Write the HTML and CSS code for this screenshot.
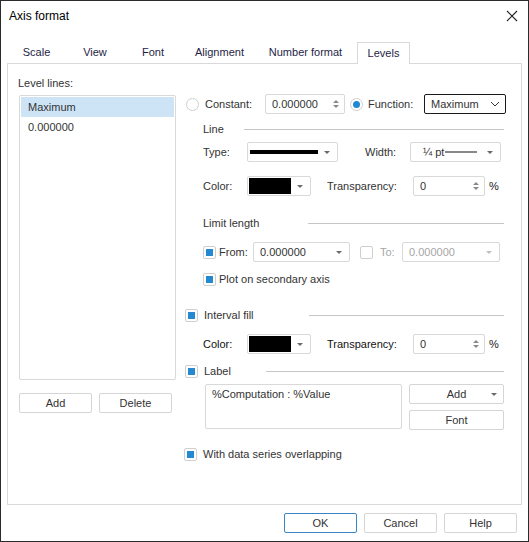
FILE: index.html
```html
<!DOCTYPE html>
<html lang="en">
<head>
  <meta charset="UTF-8">
  <title>Axis format</title>
  <link rel="stylesheet" href="styles.css">
</head>
<body>
<div class="window">
  <div class="titlebar">
    <span class="title">Axis format</span>
    <svg class="close" width="12" height="12" viewBox="0 0 12 12"><path d="M1 1 L11 11 M11 1 L1 11" stroke="#222" stroke-width="1.1" fill="none"/></svg>
  </div>

  <div class="tabs">
    <div class="tab w57">Scale</div>
    <div class="tab w59">View</div>
    <div class="tab w56">Font</div>
    <div class="tab w77">Alignment</div>
    <div class="tab w96">Number format</div>
    <div class="tab active">Levels</div>
  </div>

  <div class="panel">
    <div class="left">
      <div class="caption">Level lines:</div>
      <div class="list">
        <div class="item selected">Maximum</div>
        <div class="item">0.000000</div>
      </div>
      <div class="btn-row">
        <div class="btn w73">Add</div>
        <div class="btn w73">Delete</div>
      </div>
    </div>

    <div class="right">
      <div class="row r1">
        <span class="radio"></span>
        <span class="lbl lbl-const">Constant:</span>
        <div class="field spin w80"><span class="val">0.000000</span><span class="arrows"><i class="up"></i><i class="down"></i></span></div>
        <span class="radio on"></span>
        <span class="lbl lbl-func">Function:</span>
        <div class="field select">
          <span class="val">Maximum</span>
          <svg width="10" height="6" viewBox="0 0 10 6"><path d="M1 1 L5 5 L9 1" stroke="#333" fill="none"/></svg>
        </div>
      </div>

      <div class="heading mt8"><span>Line</span><div class="rule ml20"></div></div>

      <div class="row indent mt6">
        <span class="lbl lbl-44">Type:</span>
        <div class="field drop w91"><span class="linetype"></span><span class="tri"></span></div>
        <span class="lbl lbl-width">Width:</span>
        <div class="field drop w91"><span class="val pt">¼ pt</span><span class="thinline"></span><span class="tri"></span></div>
      </div>

      <div class="row indent mt14">
        <span class="lbl lbl-44">Color:</span>
        <div class="field drop w64"><span class="swatch"></span><span class="tri"></span></div>
        <span class="lbl lbl-transp">Transparency:</span>
        <div class="field spin w72"><span class="val">0</span><span class="arrows"><i class="up"></i><i class="down"></i></span></div>
        <span class="pct">%</span>
      </div>

      <div class="heading mt20"><span>Limit length</span><div class="rule ml49"></div></div>

      <div class="row indent mt12">
        <span class="check on"></span>
        <span class="lbl lbl-from">From:</span>
        <div class="field drop w97"><span class="val">0.000000</span><span class="tri"></span></div>
        <span class="check gap10"></span>
        <span class="lbl lbl-to dim">To:</span>
        <div class="field drop w98"><span class="val dim">0.000000</span><span class="tri light"></span></div>
      </div>

      <div class="row short indent mt10">
        <span class="check on"></span>
        <span class="lbl lbl-plot">Plot on secondary axis</span>
      </div>

      <div class="heading out mt22">
        <span class="check on"></span>
        <span class="lbl lbl-head">Interval fill</span>
        <div class="rule ml55"></div>
      </div>

      <div class="row indent mt12">
        <span class="lbl lbl-44 dark">Color:</span>
        <div class="field drop w64"><span class="swatch"></span><span class="tri"></span></div>
        <span class="lbl lbl-transp dark">Transparency:</span>
        <div class="field spin w72"><span class="val">0</span><span class="arrows"><i class="up"></i><i class="down"></i></span></div>
        <span class="pct">%</span>
      </div>

      <div class="heading out mt10">
        <span class="check on"></span>
        <span class="lbl lbl-head">Label</span>
        <div class="rule ml35"></div>
      </div>

      <div class="label-box mt6">
        <div class="textarea">%Computation : %Value</div>
        <div class="side-btns">
          <div class="btn split">Add<span class="tri"></span></div>
          <div class="btn">Font</div>
        </div>
      </div>

      <div class="row short out mt17">
        <span class="check on"></span>
        <span class="lbl lbl-head">With data series overlapping</span>
      </div>
    </div>
  </div>

  <div class="footer">
    <div class="btn w73 default">OK</div>
    <div class="btn w73">Cancel</div>
    <div class="btn w73">Help</div>
  </div>
</div>
</body>
</html>
```

FILE: styles.css
```css
body {
  margin: 0;
  font-family: "Liberation Sans", Arial, sans-serif;
  font-size: 11px;
  color: #333;
  background: #fff;
}
.window {
  width: 529px;
  height: 542px;
  box-sizing: border-box;
  border: 1px solid #2b2b2b;
  background: #fff;
}
.titlebar {
  height: 30px;
  display: flex;
  align-items: center;
  justify-content: space-between;
  padding: 0 10px 0 8px;
}
.title {
  font-size: 12px;
  color: #000;
}
.close {
  display: block;
}

/* tabs */
.tabs {
  display: flex;
  margin-top: 11px;
  padding-left: 7px;
  height: 21px;
  position: relative;
  z-index: 1;
}
.tab {
  text-align: center;
  line-height: 20px;
  color: #1e1e46;
}
.tab.w57 { width: 57px; }
.tab.w59 { width: 60px; }
.tab.w56 { width: 56px; }
.tab.w77 { width: 77px; }
.tab.w96 { width: 95px; }
.tab.active {
  width: 51px;
  margin-left: 4px;
  border: 1px solid #d9d9d9;
  border-bottom: none;
  background: #fff;
  height: 21px;
}

/* main panel */
.panel {
  margin: 0 6px 0 6px;
  height: 442px;
  box-sizing: border-box;
  border: 1px solid #d9d9d9;
  display: flex;
}
.left {
  width: 157px;
  margin-left: 11px;
  margin-top: 12px;
}
.caption {
  line-height: 14px;
  margin-left: -1px;
}
.list {
  margin-top: 5px;
  height: 285px;
  box-sizing: border-box;
  border: 1px solid #d9d9d9;
  border-radius: 2px;
  padding: 1px;
}
.item {
  height: 20px;
  line-height: 20px;
  padding-left: 7px;
  color: #333;
}
.selected {
  background: #cde4f7;
}
.btn-row {
  display: flex;
  gap: 7px;
  margin-top: 13px;
}

.btn {
  height: 20px;
  box-sizing: border-box;
  border: 1px solid #d5d5d5;
  border-radius: 2px;
  background: #fff;
  text-align: center;
  line-height: 18px;
  color: #333;
}
.btn.w73 { width: 73px; }
.btn.default { border-color: #3a86c4; }

/* right column */
.right {
  margin-left: 8px;
  margin-top: 30px;
  width: 322px;
}
.row {
  display: flex;
  align-items: center;
  height: 20px;
}
.row.short { height: 14px; }
.indent { padding-left: 19px; }
.r1 { padding-left: 2px; }
.mt6 { margin-top: 6px; }
.mt8 { margin-top: 8px; }
.mt10 { margin-top: 10px; }
.mt12 { margin-top: 12px; }
.mt14 { margin-top: 14px; }
.mt17 { margin-top: 17px; }
.mt20 { margin-top: 20px; }
.mt22 { margin-top: 22px; }

.lbl { white-space: nowrap; }
.lbl-const { width: 60px; margin-left: 6px; }
.lbl-func { width: 56px; margin-left: 5px; }
.lbl-44 { width: 44px; }
.lbl-width { width: 45px; margin-left: 27px; }
.lbl-transp { width: 86px; margin-left: 16px; }
.lbl-from { width: 34px; margin-left: 3px; }
.lbl-to { width: 22px; margin-left: 7px; }
.lbl-plot { margin-left: 3px; }
.lbl-head { margin-left: 6px; }
.dim { color: #a6a6a6; }
.dark { color: #111; }

.heading {
  display: flex;
  align-items: center;
  height: 14px;
  padding-left: 19px;
  padding-right: 2px;
}
.heading.out { padding-left: 1px; }
.row.out { padding-left: 0; }
.rule {
  flex: 1;
  height: 1px;
  background: #c6c6c6;
}
.ml20 { margin-left: 20px; }
.ml35 { margin-left: 35px; }
.ml49 { margin-left: 49px; }
.ml55 { margin-left: 55px; }

/* inputs */
.field {
  height: 20px;
  box-sizing: border-box;
  border: 1px solid #d9d9d9;
  border-radius: 2px;
  background: #fff;
  display: flex;
  align-items: center;
  position: relative;
}
.field .val { padding-left: 6px; flex: 1; }
.w64 { width: 64px; }
.w72 { width: 72px; }
.w80 { width: 80px; }
.w91 { width: 91px; }
.w97 { width: 97px; }
.w98 { width: 98px; }
.select {
  width: 82px;
  border-color: #1a1a1a;
  padding-right: 5px;
}
.gap10 { margin-left: 10px; }

.arrows {
  display: flex;
  flex-direction: column;
  gap: 2px;
  width: 16px;
  align-items: center;
}
.arrows i {
  width: 0;
  height: 0;
  border-left: 3px solid transparent;
  border-right: 3px solid transparent;
}
.arrows .up { border-bottom: 3px solid #8a8a8a; }
.arrows .down { border-top: 3px solid #8a8a8a; }

.tri {
  width: 0;
  height: 0;
  border-left: 3px solid transparent;
  border-right: 3px solid transparent;
  border-top: 3px solid #6a6a6a;
  margin: 0 7px 0 auto;
}
.tri.light { border-top-color: #c0c0c0; }

.linetype {
  width: 68px;
  height: 4px;
  background: #000;
  margin-left: 2px;
}
.field .pt {
  flex: none;
  padding-left: 12px;
}
.thinline {
  width: 32px;
  height: 2px;
  background: #888;
  margin-left: 1px;
}
.swatch {
  width: 42px;
  height: 16px;
  background: #000;
  margin-left: 1px;
}
.pct { margin-left: 4px; color: #222; }

.radio {
  width: 13px;
  height: 13px;
  box-sizing: border-box;
  border: 1px solid #cfcfcf;
  border-radius: 50%;
  background: #fff;
  position: relative;
}
.radio.on::after {
  content: "";
  position: absolute;
  left: 2px;
  top: 2px;
  width: 7px;
  height: 7px;
  border-radius: 50%;
  background: #1f89d2;
}
.radio.on { margin-left: 5px; }

.check {
  width: 13px;
  height: 13px;
  box-sizing: border-box;
  border: 1px solid #cfcfcf;
  border-radius: 2px;
  background: #fff;
  position: relative;
  flex: none;
}
.check.on::after {
  content: "";
  position: absolute;
  left: 2px;
  top: 2px;
  width: 7px;
  height: 7px;
  background: #2489d0;
}

.label-box {
  display: flex;
  gap: 7px;
  padding-left: 21px;
}
.textarea {
  width: 197px;
  height: 45px;
  box-sizing: border-box;
  border: 1px solid #d9d9d9;
  border-radius: 2px;
  padding: 3px 6px;
  color: #333;
}
.side-btns {
  display: flex;
  flex-direction: column;
  gap: 6px;
  width: 95px;
}
.btn.split {
  display: flex;
  align-items: center;
  justify-content: center;
  position: relative;
}
.btn.split .tri {
  position: absolute;
  right: 0;
  top: 8px;
  margin-right: 6px;
}

.footer {
  display: flex;
  justify-content: flex-end;
  gap: 7px;
  margin-top: 8px;
  padding-right: 11px;
}
```
